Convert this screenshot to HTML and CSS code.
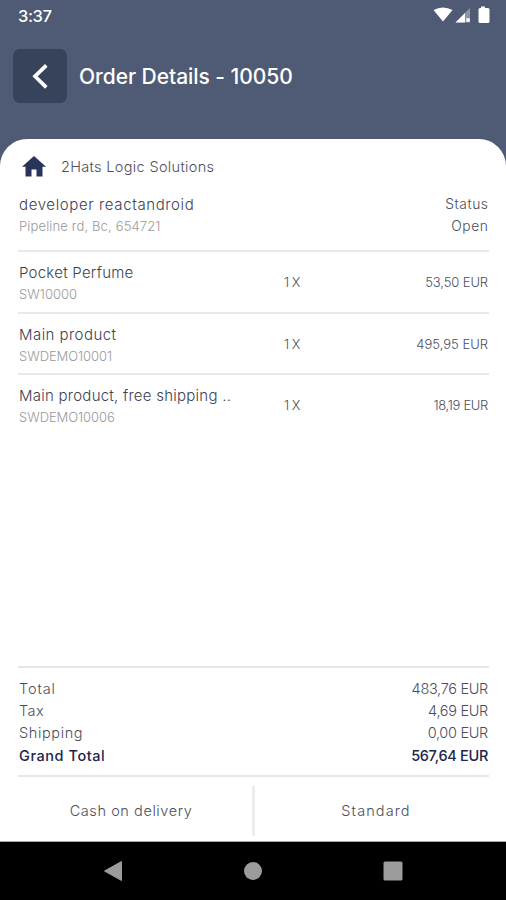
FILE: index.html
```
<!DOCTYPE html>
<html lang="en">
<head>
<meta charset="utf-8">
<title>Order Details</title>
<link rel="stylesheet" href="styles.css">
</head>
<body>
<div class="screen">
  <div class="statusbar">
    <span class="clock">3:37</span>
    <svg class="status-icons" width="60" height="20" viewBox="0 0 60 20">
      <path d="M0.500 4Q10 -1 19.500 4L10 15.500Z" fill="#fff"/>
      <path d="M22.500 16.500L37 2V16.500Z" fill="#8c95a8"/>
      <path d="M22.500 16.500L32 7V16.500Z" fill="#fff"/>
      <rect x="33.300" y="12.300" width="3.500" height="3.500" fill="#fff"/>
      <path d="M48 .5h4v1.500h3q1.500 0 1.500 1.500V15.500q0 1.500-1.500 1.500h-8q-1.500 0-1.500-1.500V3.500q0-1.500 1.500-1.500h1z" fill="#fff"/>
    </svg>
  </div>
  <header class="header">
    <button class="back" aria-label="Back">
      <svg width="54" height="54" viewBox="0 0 54 54"><path d="M33.300 16.300L22 27.300L33.300 38.300" fill="none" stroke="#fff" stroke-width="3.700"/></svg>
    </button>
    <h1 class="title">Order Details - 10050</h1>
  </header>
  <main class="card">
    <div class="shop">
      <svg width="24" height="21" viewBox="0 0 24 21"><path d="M12 0L24 10.700H20.500V20.500H14.500V13.500H9.500V20.500H3.500V10.700H0Z" fill="#28345a"/></svg>
      <span class="shop-name">2Hats Logic Solutions</span>
    </div>
    <section class="customer">
      <div>
        <div class="name person">developer reactandroid</div>
        <div class="sub address">Pipeline rd, Bc, 654721</div>
      </div>
      <div class="status">
        <div class="status-label">Status</div>
        <div class="status-value">Open</div>
      </div>
    </section>
    <section class="item">
      <div><div class="name n1">Pocket Perfume</div><div class="sub s1">SW10000</div></div>
      <div class="qty">1 X</div>
      <div class="price p1">53,50 EUR</div>
    </section>
    <section class="item">
      <div><div class="name n2">Main product</div><div class="sub s2">SWDEMO10001</div></div>
      <div class="qty">1 X</div>
      <div class="price p2">495,95 EUR</div>
    </section>
    <section class="item">
      <div><div class="name n3">Main product, free shipping ..</div><div class="sub s3">SWDEMO10006</div></div>
      <div class="qty">1 X</div>
      <div class="price p3">18,19 EUR</div>
    </section>
    <section class="totals">
      <div class="line"><span class="t1">Total</span><span class="amount">483,76 EUR</span></div>
      <div class="line"><span class="t2">Tax</span><span class="amount">4,69 EUR</span></div>
      <div class="line"><span class="t3">Shipping</span><span class="amount">0,00 EUR</span></div>
      <div class="line grand"><span class="t4">Grand Total</span><span class="amount">567,64 EUR</span></div>
    </section>
    <section class="methods">
      <div class="method m1">Cash on delivery</div>
      <div class="divider"></div>
      <div class="method m2">Standard</div>
    </section>
  </main>
  <nav class="navbar">
    <svg width="20" height="22" viewBox="0 0 20 22"><path d="M18.500 1.500V20.500L1.500 11Z" fill="#9c9c9c" stroke="#9c9c9c" stroke-linejoin="round"/></svg>
    <svg width="20" height="20" viewBox="0 0 20 20"><circle cx="10" cy="10" r="9" fill="#9c9c9c"/></svg>
    <svg width="20" height="20" viewBox="0 0 20 20"><rect x=".5" y=".5" width="19" height="19" rx="1.500" fill="#9c9c9c"/></svg>
  </nav>
</div>
</body>
</html>
```
FILE: styles.css
```
* { box-sizing: border-box; }
body { margin: 0; font-family: Inter, "Liberation Sans", sans-serif; color: #4b4e5d; }
.screen { width: 506px; height: 900px; display: flex; flex-direction: column; background: #4f5b74; overflow: hidden; white-space: nowrap; }
.statusbar { height: 32px; padding: 0 13px 0 18px; display: flex; align-items: center; justify-content: space-between; }
.clock { color: #fff; font-size: 16.5px; font-weight: 500; letter-spacing: -0.4px; }
.status-icons { margin-bottom: 1px; }
.header { height: 107px; padding: 17px 13px 0; display: flex; align-items: flex-start; gap: 12px; }
.back { width: 54px; height: 54px; padding: 0; border: 0; border-radius: 7px; background: #37435a; }
.back svg { display: block; }
.title { margin: 0; line-height: 55px; font-size: 21px; font-weight: 500; color: #fff; letter-spacing: -0.05px; }
.card { flex: 1; min-height: 0; display: flex; flex-direction: column; padding: 0 17px 0 18px; background: #fff; border-radius: 27px 27px 0 0; border-bottom: 1px solid #aaa; }
.shop { height: 54px; padding-left: 4px; display: flex; align-items: center; gap: 15px; font-size: 14.5px; font-weight: 300; letter-spacing: 0.33px; }
.customer { height: 59px; display: flex; justify-content: space-between; border-bottom: 2px solid #e9e9eb; padding: 0 1px; }
.name { font-size: 15px; line-height: 23px; font-weight: 300; color: #3d4152; }
.sub { font-size: 13px; line-height: 20px; font-weight: 300; color: #999; }
.status { text-align: right; font-size: 13.800px; line-height: 22px; font-weight: 300; letter-spacing: 0.6px; margin-right: -0.6px; }
.item { height: 61.500px; padding: 9px 1px 0; display: grid; grid-template-columns: 265px 1fr auto; border-bottom: 2px solid #e9e9eb; }
.item:nth-of-type(4) { border-bottom: 0; }
.qty, .price { font-size: 13px; line-height: 43px; font-weight: 300; }
.qty { letter-spacing: -0.5px; }
.person { letter-spacing: 0.62px; }
.address { letter-spacing: 0.15px; }
.n1, .n3 { letter-spacing: 0.25px; }
.n2 { letter-spacing: 0.45px; }
.s2, .s3 { letter-spacing: -0.07px; }
.p1 { letter-spacing: -0.1px; }
.p3 { letter-spacing: -0.33px; }
.totals { margin-top: auto; height: 109px; padding: 10px 1px 0; border-top: 2px solid #e6e6e8; }
.line { display: flex; justify-content: space-between; font-size: 14.5px; line-height: 22.200px; font-weight: 300; }
.t1 { letter-spacing: 0.85px; }
.t2 { letter-spacing: 0.4px; }
.t3 { letter-spacing: 0.63px; }
.t4 { letter-spacing: 0.56px; }
.amount { letter-spacing: -0.31px; }
.grand { font-weight: 500; color: #20254d; }
.methods { height: 66px; display: grid; grid-template-columns: 234px 3px 1fr; align-items: center; text-align: center; border-top: 2px solid #e6e6e8; padding-top: 3px; font-size: 14.5px; font-weight: 300; }
.m1 { letter-spacing: 0.58px; padding-right: 8px; }
.m2 { letter-spacing: 1.1px; padding-left: 8px; }
.divider { height: 50px; background: #ececee; }
.navbar { height: 58px; padding: 0 103px; display: flex; align-items: center; justify-content: space-between; background: #000; }
```
